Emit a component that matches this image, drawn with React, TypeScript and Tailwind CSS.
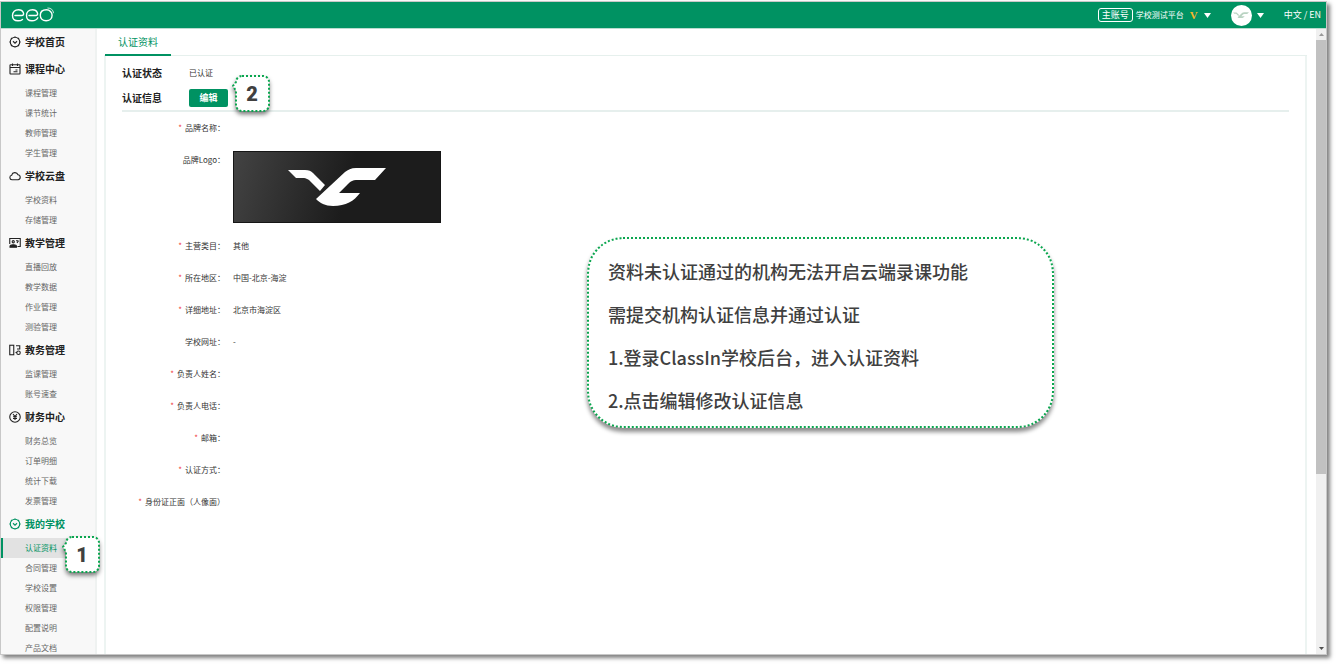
import { ReactNode } from "react";

type MenuGroup = {
  title: string;
  icon: ReactNode;
  items: string[];
  active?: boolean;
};

type Field = {
  label: string;
  value?: string;
  required?: boolean;
  logo?: boolean;
};

function Icon({ children }: { children: ReactNode }) {
  return (
    <svg
      className="size-3 shrink-0"
      viewBox="0 0 24 24"
      fill="none"
      stroke="currentColor"
      strokeWidth="2.2"
      aria-hidden="true"
    >
      {children}
    </svg>
  );
}

const badgeIcon = (
  <Icon>
    <circle cx="12" cy="12" r="9.5" />
    <path d="M12 1v2M12 21v2M1 12h2M21 12h2M4 4l1.5 1.5M20 4l-1.5 1.5M4 20l1.5-1.5M20 20l-1.5-1.5" />
    <path d="m8 10.5 4 4 4-4" />
  </Icon>
);

const calendarIcon = (
  <Icon>
    <rect x="2" y="3.5" width="20" height="18.5" rx="1" />
    <path d="M2 9h20M7 1v5M17 1v5M9 17.5h8M13 14h4" />
  </Icon>
);

const cloudIcon = (
  <Icon>
    <path d="M6 19.5a4.6 4.6 0 0 1-.6-9.1A6.6 6.6 0 0 1 18 9.6a5 5 0 0 1 .2 9.9z" />
  </Icon>
);

const teachIcon = (
  <Icon>
    <path d="M1.5 14V3h21v16H17M14 7.5h5M16 12l3-4.5" />
    <circle cx="8.5" cy="9.5" r="2.2" />
    <path d="M2 20.5v-2c0-2 3-3 6.5-3s6.5 1 6.5 3v2z" fill="currentColor" />
  </Icon>
);

const affairsIcon = (
  <Icon>
    <rect x="1.5" y="2.5" width="8" height="19" />
    <path d="M14 3.5h7.5V10H16M13 17h3" />
    <circle cx="19" cy="17.5" r="3.5" />
  </Icon>
);

const financeIcon = (
  <Icon>
    <circle cx="12" cy="12" r="10.5" />
    <path d="m8 6 4 5 4-5M12 11v7M8 11.5h8M8 15h8" />
  </Icon>
);

const groups: MenuGroup[] = [
  { title: "学校首页", icon: badgeIcon, items: [] },
  { title: "课程中心", icon: calendarIcon, items: ["课程管理", "课节统计", "教师管理", "学生管理"] },
  { title: "学校云盘", icon: cloudIcon, items: ["学校资料", "存储管理"] },
  { title: "教学管理", icon: teachIcon, items: ["直播回放", "教学数据", "作业管理", "测验管理"] },
  { title: "教务管理", icon: affairsIcon, items: ["监课管理", "账号速查"] },
  { title: "财务中心", icon: financeIcon, items: ["财务总览", "订单明细", "统计下载", "发票管理"] },
  {
    title: "我的学校",
    icon: badgeIcon,
    items: ["认证资料", "合同管理", "学校设置", "权限管理", "配置说明", "产品文档"],
    active: true,
  },
];

const fields: Field[] = [
  { label: "品牌名称：", required: true },
  { label: "品牌Logo：", logo: true },
  { label: "主营类目：", value: "其他", required: true },
  { label: "所在地区：", value: "中国-北京-海淀", required: true },
  { label: "详细地址：", value: "北京市海淀区", required: true },
  { label: "学校网址：", value: "-" },
  { label: "负责人姓名：", required: true },
  { label: "负责人电话：", required: true },
  { label: "邮箱：", required: true },
  { label: "认证方式：", required: true },
  { label: "身份证正面（人像面）", required: true },
];

const notes = [
  "资料未认证通过的机构无法开启云端录课功能",
  "需提交机构认证信息并通过认证",
  "1.登录ClassIn学校后台，进入认证资料",
  "2.点击编辑修改认证信息",
];

function Caret() {
  return (
    <svg className="h-[5px] w-[7px]" viewBox="0 0 7 5" fill="currentColor" aria-hidden="true">
      <path d="M0 0h7L3.5 5z" />
    </svg>
  );
}

function EeoLogo() {
  return (
    <svg
      className="h-4 w-11"
      viewBox="0 0 44 16"
      fill="none"
      stroke="white"
      strokeWidth="1.4"
      strokeLinecap="round"
      role="img"
      aria-label="eeo"
    >
      <path d="M4 8.5h6.5c2 0 2.5-1.500 1.800-3C11.500 3.700 9.800 2.700 7.500 2.700 4 2.700 1.500 5 1.500 8.500s2.300 5.300 5.500 5.300c2 0 3.500-.5 4.500-1.400" />
      <path d="M18 8.500h6.500c2 0 2.500-1.500 1.800-3-.8-1.800-2.500-2.800-4.800-2.800-3.500 0-6 2.300-6 5.800s2.300 5.300 5.500 5.300c2.800 0 4.800-1 5.800-3" />
      <path d="M35.500 2.700c-3.800 0-6.200 2.300-6.200 5.600s2.400 5.500 5.800 5.500c3.500 0 6-2.300 6-5.600 0-2.800-2.300-5.500-5.600-5.500z" />
      <path d="M36.800 1c3.300 0 5.400 1.800 5.700 4.800" strokeWidth="0.8" />
    </svg>
  );
}

function BirdMark({ className }: { className: string }) {
  return (
    <svg className={className} viewBox="0 0 98 40" fill="currentColor" aria-hidden="true">
      <path d="M0 3h17c4 0 6 1 8 3l12 12-5 6L21 13c-2-1-3-2-5-2H8z" />
      <path d="M98 1H68c-5 0-8 2-11 4L28 32c4 4 9 7 17 7 13 0 21-5 27-13H51l9-9c3-3 5-4 8-4h19z" />
    </svg>
  );
}

function Step({ number }: { number: number }) {
  return (
    <span className="relative flex h-[37px] w-[38px] items-center justify-center pl-0.5 font-['Roboto'] text-xl font-black text-[#404040]">
      <svg
        className="absolute inset-0 size-full overflow-visible drop-shadow-[0_3px_2px_rgba(0,0,0,0.5)]"
        viewBox="0 0 38 37"
        aria-hidden="true"
      >
        <path
          d="M10 1h21a6 6 0 0 1 6 6v23a6 6 0 0 1-6 6H10a6 6 0 0 1-6-6V16L1 11l3-4a6 6 0 0 1 6-6z"
          fill="white"
          stroke="#0aa64f"
          strokeWidth="2"
          strokeDasharray="2 2"
        />
      </svg>
      <span className="relative">{number}</span>
    </span>
  );
}

function Header() {
  return (
    <header className="flex h-[27px] shrink-0 items-center justify-between border-b border-[#b9dccf] bg-[#009262] pr-[5px] pl-[10px] text-white">
      <EeoLogo />
      <div className="flex items-center text-[8px]">
        <span className="rounded-[3px] border border-white px-[3px] text-[9px] leading-3">主账号</span>
        <button type="button" className="ml-[3px] flex items-center gap-1.5">
          学校测试平台
          <span className="font-['Liberation_Serif'] text-[11px] font-bold text-[#f5b52a]">V</span>
          <Caret />
        </button>
        <button type="button" aria-label="账户" className="ml-5 flex items-center gap-[5px]">
          <span className="flex size-[21px] items-center justify-center rounded-full bg-white text-[#b9d3c2]">
            <BirdMark className="w-4" />
          </span>
          <Caret />
        </button>
        <button type="button" className="ml-5 text-[9px]">中文 / EN</button>
      </div>
    </header>
  );
}

function Sidebar() {
  return (
    <nav className="relative z-10 w-[96px] shrink-0 self-stretch border-r-2 border-[#eff2f1] bg-[#f8f8f8]">
      {groups.map((group) => (
        <div key={group.title}>
          <a
            href="#"
            className={`flex h-[27px] items-center gap-1 pb-0.5 pl-2 text-[10px] font-bold ${
              group.active ? "text-[#009262]" : "text-[#222]"
            }`}
          >
            {group.icon}
            {group.title}
          </a>
          {group.items.map((item) => {
            const current = item === "认证资料";
            return (
              <div key={item} className="relative">
                <a
                  href="#"
                  className={`flex h-5 items-center border-l-2 pl-[22px] text-[8px] ${
                    current
                      ? "border-[#009262] bg-[#e2e2e2] text-[#009262]"
                      : "border-transparent text-[#666]"
                  }`}
                >
                  {item}
                </a>
                {current && (
                  <div className="absolute -top-[2px] left-[61px] z-20">
                    <Step number={1} />
                  </div>
                )}
              </div>
            );
          })}
        </div>
      ))}
    </nav>
  );
}

function FieldRow({ label, value, required, logo }: Field) {
  return (
    <div className="flex gap-2 text-[8px] leading-8 text-[#333]">
      <dt className="flex w-[103px] shrink-0 justify-end gap-[3px] whitespace-nowrap">
        {required && <span className="text-[#f03c3c]">*</span>}
        {label}
      </dt>
      <dd>
        {logo ? (
          <div className="my-[7px] flex h-[72px] w-[208px] items-center justify-center border border-[#161616] bg-linear-[105deg] from-[#434343] to-[#1c1c1c] to-55% text-white">
            <BirdMark className="w-[98px]" />
          </div>
        ) : (
          value
        )}
      </dd>
    </div>
  );
}

function Scrollbar() {
  return (
    <div className="flex w-[10px] shrink-0 flex-col items-center justify-between bg-[#f0f0f0] text-[#505050]">
      <div className="flex h-[11px] shrink-0 items-center">
        <svg className="h-[3px] w-[5px]" viewBox="0 0 5 3" fill="#999" aria-hidden="true">
          <path d="M0 3h5L2.5 0z" />
        </svg>
      </div>
      <div className="w-full flex-1">
        <div className="h-[72%] bg-[#c1c1c1]" />
      </div>
      <div className="flex h-[11px] shrink-0 items-center">
        <svg className="h-[3px] w-[5px]" viewBox="0 0 5 3" fill="currentColor" aria-hidden="true">
          <path d="M0 0h5L2.5 3z" />
        </svg>
      </div>
    </div>
  );
}

export default function App() {
  return (
    <div className="h-screen overflow-hidden bg-white pr-4 pb-[10px] pt-px font-['Noto_Sans_CJK_SC',sans-serif]">
      <div className="flex h-full flex-col overflow-hidden border border-[#c8c8c8] shadow-[3px_3px_4px_rgba(0,0,0,0.5)]">
        <Header />
        <div className="flex min-h-0 flex-1">
          <Sidebar />
          <main className="relative flex min-w-0 flex-1 flex-col pr-[9px] pl-[7px]">
            <div className="flex h-[27px] shrink-0 border-b border-[#e6f0ed]">
              <button
                type="button"
                className="-mb-px ml-px w-[66px] border-b-2 border-[#009262] text-[10px] text-[#009262]"
              >
                认证资料
              </button>
            </div>
            <section className="flex-1 border-x-2 border-[#edf4f2] px-4 pt-1">
              <div className="flex h-[25px] items-center">
                <h2 className="w-[67px] text-[10px] font-bold text-[#222]">认证状态</h2>
                <span className="text-[8px] text-[#333]">已认证</span>
              </div>
              <div className="relative flex h-[27px] items-center border-b-2 border-[#e6efed]">
                <h2 className="w-[67px] text-[10px] font-bold text-[#222]">认证信息</h2>
                <button
                  type="button"
                  className="h-[18px] w-[39px] rounded-[2px] bg-[#009262] text-[9px] font-bold text-white"
                >
                  编辑
                </button>
                <div className="absolute -top-[10px] left-[110px]">
                  <Step number={2} />
                </div>
              </div>
              <dl>
                {fields.map((field) => (
                  <FieldRow key={field.label} {...field} />
                ))}
              </dl>
            </section>
            <aside className="absolute top-[208px] left-[490px] w-[467px] rounded-[36px] border-2 border-dotted border-[#0aa64f] bg-white px-[19px] pt-[11px] pb-1 text-lg leading-[43px] font-medium text-[#404040] shadow-[0_4px_4px_rgba(0,0,0,0.45)]">
              {notes.map((note) => (
                <p key={note}>{note}</p>
              ))}
            </aside>
          </main>
          <Scrollbar />
        </div>
      </div>
    </div>
  );
}
